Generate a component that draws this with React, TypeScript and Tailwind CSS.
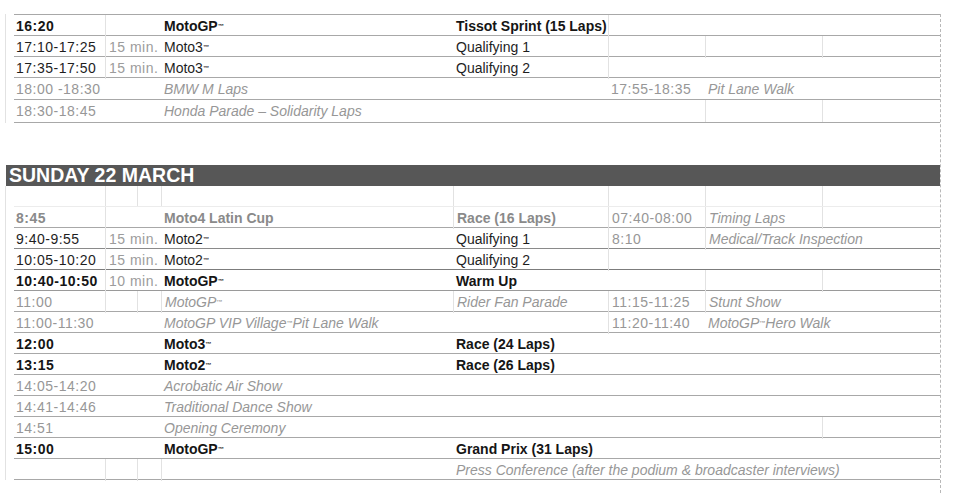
import React from "react";

type Seg = { s: number; t?: string; k?: keyof typeof S; b?: boolean };

const S = {
  B: "font-bold text-[#151515]",
  N: "text-[#1e1e1e]",
  G: "text-[#979797]",
  GI: "italic text-[#979797]",
  GB: "font-bold text-[#8a8a8a]",
  M: "text-[#9c9c9c]",
};

const span = ["", "col-span-1", "col-span-2", "col-span-3", "col-span-4", "col-span-5", "col-span-6", "col-span-7", "col-span-8"];

function Txt({ t }: { t: string }) {
  const parts = t.split("™");
  return (
    <>
      {parts.map((p, i) => (
        <React.Fragment key={i}>
          {p}
          {i < parts.length - 1 && <sup className="relative -top-[1px] text-[6px] font-bold">™</sup>}
        </React.Fragment>
      ))}
    </>
  );
}

function Row({ segs, h = "h-[21px]", line = "border-[#a8a8a8]", top = false }: { segs: Seg[]; h?: string; line?: string; top?: boolean }) {
  return (
    <div className={`flex ${h}`}>
      <div className="w-[9px] shrink-0 border-l border-[#e2e2e2]" />
      <div
        className={`grid w-[926px] grid-cols-[91px_32px_24px_292px_155px_97px_117px_118px] border-b ${line} ${
          top ? "border-t border-t-[#a8a8a8]" : ""
        }`}
      >
        {segs.map((g, i) => (
          <div
            key={i}
            className={`${span[g.s]} ${g.b ? "border-l border-[#e2e2e2]" : ""} ${i === 0 ? "pl-[2px]" : "pl-[3px]"} ${
              g.t && /^\d/.test(g.t) ? "tracking-[0.5px]" : ""
            } flex items-center whitespace-nowrap pt-[1px] text-[14px] ${g.k ? S[g.k] : ""}`}
          >
            {g.t && <Txt t={g.t} />}
          </div>
        ))}
      </div>
    </div>
  );
}

const saturday: { segs: Seg[]; h: string }[] = [
  {
    h: "h-[22px]",
    segs: [
      { s: 1, t: "16:20", k: "B" },
      { s: 2, b: true },
      { s: 1, t: "MotoGP™", k: "B" },
      { s: 1, t: "Tissot Sprint (15 Laps)", k: "B" },
      { s: 3, b: true },
    ],
  },
  {
    h: "h-[21px]",
    segs: [
      { s: 1, t: "17:10-17:25", k: "N" },
      { s: 2, t: "15 min.", k: "M", b: true },
      { s: 1, t: "Moto3™", k: "N" },
      { s: 1, t: "Qualifying 1", k: "N" },
      { s: 1, b: true },
      { s: 1, b: true },
      { s: 1, b: true },
    ],
  },
  {
    h: "h-[21px]",
    segs: [
      { s: 1, t: "17:35-17:50", k: "N" },
      { s: 2, t: "15 min.", k: "M", b: true },
      { s: 1, t: "Moto3™", k: "N" },
      { s: 1, t: "Qualifying 2", k: "N" },
      { s: 3, b: true },
    ],
  },
  {
    h: "h-[22px]",
    segs: [
      { s: 3, t: "18:00 -18:30", k: "G" },
      { s: 1, t: "BMW M Laps", k: "GI" },
      { s: 1 },
      { s: 1, t: "17:55-18:35", k: "G" },
      { s: 2, t: "Pit Lane Walk", k: "GI" },
    ],
  },
  {
    h: "h-[23px]",
    segs: [
      { s: 3, t: "18:30-18:45", k: "G" },
      { s: 1, t: "Honda Parade – Solidarity Laps", k: "GI" },
      { s: 2 },
      { s: 1, b: true },
      { s: 1, b: true },
    ],
  },
];

const sunday: { segs: Seg[]; line?: string }[] = [
  {
    line: "border-[#ececec]",
    segs: [
      { s: 1 },
      { s: 1, b: true },
      { s: 1, b: true },
      { s: 1, b: true },
      { s: 1, b: true },
      { s: 1, b: true },
      { s: 1, b: true },
      { s: 1, b: true },
    ],
  },
  {
    segs: [
      { s: 1, t: "8:45", k: "GB" },
      { s: 2, b: true },
      { s: 1, t: "Moto4 Latin Cup", k: "GB" },
      { s: 1, t: "Race (16 Laps)", k: "GB", b: true },
      { s: 1, t: "07:40-08:00", k: "G", b: true },
      { s: 1, t: "Timing Laps", k: "GI", b: true },
      { s: 1, b: true },
    ],
  },
  {
    line: "border-[#8a8a8a]",
    segs: [
      { s: 1, t: "9:40-9:55", k: "N" },
      { s: 2, t: "15 min.", k: "M", b: true },
      { s: 1, t: "Moto2™", k: "N" },
      { s: 1, t: "Qualifying 1", k: "N" },
      { s: 1, t: "8:10", k: "G", b: true },
      { s: 2, t: "Medical/Track Inspection", k: "GI", b: true },
    ],
  },
  {
    line: "border-[#7c7c7c]",
    segs: [
      { s: 1, t: "10:05-10:20", k: "N" },
      { s: 2, t: "15 min.", k: "M", b: true },
      { s: 1, t: "Moto2™", k: "N" },
      { s: 1, t: "Qualifying 2", k: "N" },
      { s: 3, b: true },
    ],
  },
  {
    line: "border-[#9a9a9a]",
    segs: [
      { s: 1, t: "10:40-10:50", k: "B" },
      { s: 2, t: "10 min.", k: "M", b: true },
      { s: 1, t: "MotoGP™", k: "B" },
      { s: 1, t: "Warm Up", k: "B" },
      { s: 1 },
      { s: 1, b: true },
      { s: 1, b: true },
    ],
  },
  {
    segs: [
      { s: 1, t: "11:00", k: "G" },
      { s: 1, b: true },
      { s: 1, b: true },
      { s: 1, t: "MotoGP™", k: "GI", b: true },
      { s: 1, t: "Rider Fan Parade", k: "GI", b: true },
      { s: 1, t: "11:15-11:25", k: "G", b: true },
      { s: 2, t: "Stunt Show", k: "GI", b: true },
    ],
  },
  {
    segs: [
      { s: 3, t: "11:00-11:30", k: "G" },
      { s: 2, t: "MotoGP VIP Village™ Pit Lane Walk", k: "GI" },
      { s: 1, t: "11:20-11:40", k: "G", b: true },
      { s: 2, t: "MotoGP™ Hero Walk", k: "GI" },
    ],
  },
  {
    segs: [
      { s: 3, t: "12:00", k: "B" },
      { s: 1, t: "Moto3™", k: "B" },
      { s: 1, t: "Race (24 Laps)", k: "B" },
      { s: 3 },
    ],
  },
  {
    segs: [
      { s: 3, t: "13:15", k: "B" },
      { s: 1, t: "Moto2™", k: "B" },
      { s: 1, t: "Race (26 Laps)", k: "B" },
      { s: 3 },
    ],
  },
  {
    segs: [
      { s: 3, t: "14:05-14:20", k: "G" },
      { s: 5, t: "Acrobatic Air Show", k: "GI" },
    ],
  },
  {
    segs: [
      { s: 3, t: "14:41-14:46", k: "G" },
      { s: 5, t: "Traditional Dance Show", k: "GI" },
    ],
  },
  {
    segs: [
      { s: 3, t: "14:51", k: "G" },
      { s: 1, t: "Opening Ceremony", k: "GI" },
      { s: 3 },
      { s: 1, b: true },
    ],
  },
  {
    segs: [
      { s: 3, t: "15:00", k: "B" },
      { s: 1, t: "MotoGP™", k: "B" },
      { s: 4, t: "Grand Prix (31 Laps)", k: "B" },
    ],
  },
  {
    segs: [
      { s: 1 },
      { s: 1, b: true },
      { s: 1, b: true },
      { s: 1, b: true },
      { s: 4, t: "Press Conference (after the podium & broadcaster interviews)", k: "GI" },
    ],
  },
];

export default function App() {
  return (
    <div className="h-[493px] w-[953px] overflow-hidden bg-white font-['Liberation_Sans',Arial,sans-serif]">
      <div className="ml-[5px] mt-[14px] h-[479px] w-[936px] border-r border-dashed border-[#b8b8b8]">
        {saturday.map((r, i) => (
          <Row key={i} segs={r.segs} h={r.h} top={i === 0} />
        ))}

        <div className="mt-[42px] ml-[1px] flex h-[21px] items-center bg-[#575757] pl-[3px] pt-[1px]">
          <span className="text-[19.5px] font-bold leading-none text-white">SUNDAY 22 MARCH</span>
        </div>

        {sunday.map((r, i) => (
          <Row key={i} segs={r.segs} line={r.line} />
        ))}
      </div>
    </div>
  );
}
